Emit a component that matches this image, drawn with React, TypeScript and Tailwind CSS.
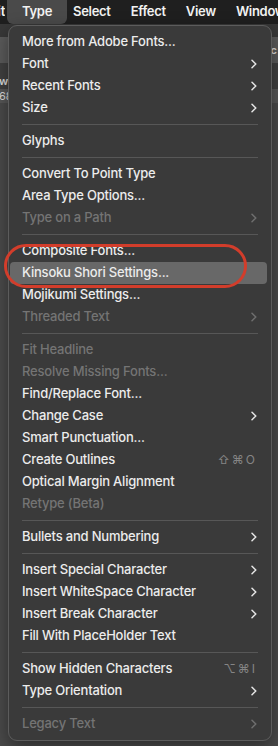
import React from "react";

type Item =
  | { kind: "sep" }
  | {
      kind?: "item";
      label: string;
      sub?: boolean;
      disabled?: boolean;
      shortcut?: string;
      active?: boolean;
    };

const items: Item[] = [
  { label: "More from Adobe Fonts..." },
  { label: "Font", sub: true },
  { label: "Recent Fonts", sub: true },
  { label: "Size", sub: true },
  { kind: "sep" },
  { label: "Glyphs" },
  { kind: "sep" },
  { label: "Convert To Point Type" },
  { label: "Area Type Options..." },
  { label: "Type on a Path", sub: true, disabled: true },
  { kind: "sep" },
  { label: "Composite Fonts..." },
  { label: "Kinsoku Shori Settings...", active: true },
  { label: "Mojikumi Settings..." },
  { label: "Threaded Text", sub: true, disabled: true },
  { kind: "sep" },
  { label: "Fit Headline", disabled: true },
  { label: "Resolve Missing Fonts...", disabled: true },
  { label: "Find/Replace Font..." },
  { label: "Change Case", sub: true },
  { label: "Smart Punctuation..." },
  { label: "Create Outlines", shortcut: "⇧⌘O" },
  { label: "Optical Margin Alignment" },
  { label: "Retype (Beta)", disabled: true },
  { kind: "sep" },
  { label: "Bullets and Numbering", sub: true },
  { kind: "sep" },
  { label: "Insert Special Character", sub: true },
  { label: "Insert WhiteSpace Character", sub: true },
  { label: "Insert Break Character", sub: true },
  { label: "Fill With PlaceHolder Text" },
  { kind: "sep" },
  { label: "Show Hidden Characters", shortcut: "⌥⌘I" },
  { label: "Type Orientation", sub: true },
  { kind: "sep" },
  { label: "Legacy Text", sub: true, disabled: true },
];

const Chevron = ({ dim }: { dim?: boolean }) => (
  <svg
    width="6"
    height="10"
    viewBox="0 0 6 10"
    fill="none"
    className={dim ? "text-[#6f6f6f]" : "text-[#e6e6e6]"}
  >
    <path
      d="M1 1.2L4.8 5L1 8.8"
      stroke="currentColor"
      strokeWidth="1.5"
      strokeLinecap="round"
      strokeLinejoin="round"
    />
  </svg>
);

const App = () => {
  return (
    <div className="relative w-[278px] h-[746px] overflow-hidden bg-[#4a4a4a] font-['Inter','DejaVu_Sans',sans-serif]">
      {/* menu bar */}
      <div className="flex h-[24px] items-center bg-[#1f1f1f] text-[13px] font-semibold tracking-[-0.3px] text-[#f2f2f2]">
        <div className="flex w-[5px] shrink-0 justify-end overflow-hidden">
          <span>Edit</span>
        </div>
        <div className="ml-[2px] flex h-full shrink-0 items-center rounded-b-[6px] bg-[#4a4a4a] px-[15px]">
          Type
        </div>
        <div className="ml-[6px] flex shrink-0 gap-[20px] whitespace-nowrap">
          <span>Select</span>
          <span>Effect</span>
          <span>View</span>
          <span>Window</span>
        </div>
      </div>

      {/* app content behind the menu */}
      <div className="flex flex-col text-[11px] text-[#dcdcdc]">
        <div className="h-[13px] bg-[#383838]" />
        <div className="flex h-[26px] items-center justify-end bg-[#5b5b5b] pr-[1px]">
          <span className="font-semibold">c</span>
        </div>
        <div className="h-[10px] bg-[#404040]" />
        <div className="flex h-[16px] items-center bg-[#404040]">
          <span className="-ml-[1px] font-semibold">w)</span>
        </div>
        <div className="flex h-[14px] items-center bg-[#575757]">
          <span className="-ml-[1px]">68</span>
        </div>
        <div className="h-[600px] bg-[#4a4a4a]" />
      </div>

      {/* dropdown */}
      <div className="absolute left-[8px] top-[25px] w-[264px] rounded-[9px] border border-[#5c5c5c] bg-[#3a3a3a] py-[5px] shadow-[0_6px_18px_rgba(0,0,0,0.4)]">
        {items.map((it, i) =>
          it.kind === "sep" ? (
            <div key={i} className="flex h-[11px] items-center px-[13px]">
              <div className="h-px w-full bg-[#575757]" />
            </div>
          ) : (
            <div
              key={i}
              className={`ml-[1px] mr-[4px] flex h-[22px] items-center justify-between rounded-[4px] pl-[12px] pr-[10px] text-[13px] font-medium tracking-[-0.2px] ${
                it.active ? "bg-[#686868]" : ""
              } ${it.disabled ? "text-[#747474]" : "text-[#ececec]"}`}
            >
              <span className="whitespace-nowrap">{it.label}</span>
              {it.sub && <Chevron dim={it.disabled} />}
              {it.shortcut && (
                <span className="tracking-[2px] text-[12px] font-normal text-[#858585]">
                  {it.shortcut}
                </span>
              )}
            </div>
          )
        )}
      </div>

      {/* red annotation */}
      <div className="absolute left-[4px] top-[244px] h-[44px] w-[243px] rounded-full border-[3px] border-[#d23d2b]" />
    </div>
  );
};

export default App;
